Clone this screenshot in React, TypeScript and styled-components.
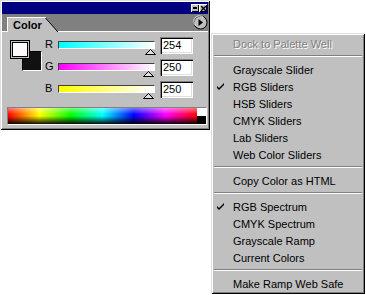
import React from "react"
import styled, { createGlobalStyle } from "styled-components"

const GlobalStyle = createGlobalStyle`
    html, body {
        margin: 0;
        padding: 0;
        background: #fff;
    }
    body {
        font-family: "Liberation Sans", Arial, sans-serif;
        font-size: 11px;
        color: #000;
    }
`

const raised = `
    inset 1px 1px 0 #dfdfdf,
    inset -1px -1px 0 #000,
    inset 2px 2px 0 #fff,
    inset -2px -2px 0 #808080
`

const sunken = `
    inset 1px 1px 0 #808080,
    inset 2px 2px 0 #000,
    inset -1px -1px 0 #fff,
    inset -2px -2px 0 #dfdfdf
`

const Screen = styled.div`
    display: flex;
    align-items: flex-start;
    width: 366px;
    height: 295px;
    overflow: hidden;
`

const Panel = styled.div`
    width: 210px;
    height: 130px;
    box-sizing: border-box;
    padding: 2px;
    background: #c0c0c0;
    box-shadow: ${raised};
    display: flex;
    flex-direction: column;
`

const TitleBar = styled.div`
    height: 12px;
    background: #000080;
    display: flex;
    justify-content: flex-end;
    align-items: center;
    padding-right: 1px;
`

const TitleButton = styled.div`
    width: 8px;
    height: 8px;
    box-sizing: border-box;
    background: #c0c0c0;
    box-shadow: inset 1px 1px 0 #fff, inset -1px -1px 0 #000;
    display: flex;
    align-items: center;
    justify-content: center;
`

const TabRow = styled.div`
    height: 18px;
    background: #808080;
    display: flex;
    align-items: flex-end;
`

const TabGap = styled.div`
    width: 5px;
    align-self: stretch;
    box-sizing: border-box;
    border-bottom: 1px solid #fff;
`

const Tab = styled.div`
    width: 38px;
    height: 15px;
    box-sizing: border-box;
    background: #c0c0c0;
    border-top: 1px solid #fff;
    border-left: 1px solid #fff;
    padding-left: 5px;
    font-weight: bold;
    font-size: 11px;
    line-height: 14px;
`

const TabFill = styled.div`
    flex: 1;
    align-self: stretch;
    box-sizing: border-box;
    border-bottom: 1px solid #fff;
    display: flex;
    justify-content: flex-end;
    align-items: center;
    padding-right: 0;
`

const Body = styled.div`
    flex: 1;
    padding: 5px 0 0 5px;
    display: flex;
    flex-direction: column;
`

const TopSection = styled.div`
    display: flex;
    align-items: flex-start;
`

const Swatches = styled.div`
    position: relative;
    width: 38px;
    height: 34px;
    margin-top: 3px;
`

const Foreground = styled.div`
    position: absolute;
    z-index: 1;
    left: 3px;
    top: 0;
    width: 20px;
    height: 19px;
    box-sizing: border-box;
    border: 1px solid #000;
    box-shadow: inset 0 0 0 1px #c0c0c0, inset 0 0 0 2px #000;
    background: #fef9f9;
`

const Background = styled.div`
    position: absolute;
    left: 15px;
    top: 11px;
    width: 20px;
    height: 20px;
    box-sizing: border-box;
    border: 1px solid #000;
    border-right-color: #fff;
    border-bottom-color: #fff;
    background: #111;
`

const SliderGrid = styled.div`
    display: grid;
    grid-template-columns: 13px 97px 38px;
    grid-auto-rows: 22px;
`

const Label = styled.div`
    font-size: 11px;
    line-height: 11px;
    padding-top: 2px;
`

const Track = styled.div`
    position: relative;
    padding-top: 4px;
`

const Bar = styled.div<{ $color: string }>`
    height: 8px;
    box-sizing: border-box;
    border: 1px solid;
    border-color: #404040 #fff #fff #404040;
    background: linear-gradient(to right, ${p => p.$color}, #fff);
`

const Knob = styled.svg`
    position: absolute;
    top: 12px;
    display: block;
`

const ValueBox = styled.div`
    margin-left: 5px;
    width: 33px;
    height: 17px;
    box-sizing: border-box;
    background: #fff;
    box-shadow: ${sunken};
    padding: 2px 0 0 3px;
    font-size: 11px;
    line-height: 13px;
`

const Spectrum = styled.div`
    margin-top: 4px;
    width: 200px;
    height: 18px;
    box-sizing: border-box;
    border: 1px solid;
    border-color: #808080 #fff #fff #808080;
    display: flex;
`

const SpectrumRamp = styled.div`
    flex: 1;
    background:
        linear-gradient(
            to bottom,
            rgba(255, 255, 255, 0.45) 0%,
            rgba(255, 255, 255, 0) 40%,
            rgba(0, 0, 0, 0) 50%,
            rgba(0, 0, 0, 0.95) 100%
        ),
        linear-gradient(
            to right,
            #f00 0%,
            #ff0 16.6%,
            #0f0 33.3%,
            #0ff 50%,
            #00f 66.6%,
            #f0f 83.3%,
            #f00 100%
        );
`

const EndSwatches = styled.div`
    width: 9px;
    display: flex;
    flex-direction: column;
`

const EndSwatch = styled.div<{ $color: string }>`
    flex: 1;
    background: ${p => p.$color};
`

const Menu = styled.div`
    margin-left: 1px;
    margin-top: 33px;
    width: 154px;
    height: 261px;
    box-sizing: border-box;
    padding: 2px;
    background: #c0c0c0;
    box-shadow: ${raised};
`

const MenuItem = styled.div<{ $disabled?: boolean }>`
    height: 17px;
    display: flex;
    align-items: center;
    padding-left: 4px;
    font-size: 11px;
    color: ${p => (p.$disabled ? "#808080" : "#000")};
    text-shadow: ${p => (p.$disabled ? "1px 1px 0 #fff" : "none")};
`

const CheckCol = styled.div`
    width: 16px;
    display: flex;
    align-items: center;
`

const Separator = styled.div`
    height: 0;
    margin: 3px 1px 4px;
    border-top: 1px solid #808080;
    border-bottom: 1px solid #fff;
`

const MenuButton = () => (
    <svg width={15} height={15} viewBox="0 0 15 15">
        <circle cx={7.5} cy={7.5} r={6.5} fill="#c0c0c0" stroke="#000" strokeWidth={1} />
        <path d="M2.5 10.5 A5 5 0 0 1 10.5 2.5" fill="none" stroke="#fff" strokeWidth={1} />
        <path d="M5.5 4 L10 7.5 L5.5 11 Z" fill="#000" />
    </svg>
)

const Check = () => (
    <svg width={8} height={7} viewBox="0 0 8 7">
        <path d="M0 3 L2 5 L7 0 L7 2 L2 7 L0 5 Z" fill="#000" />
    </svg>
)

const channels = [
    { name: "R", color: "#0ff", value: 254 },
    { name: "G", color: "#f0f", value: 250 },
    { name: "B", color: "#ff0", value: 250 }
]

type Entry = { label: string; checked?: boolean; disabled?: boolean } | "sep"

const menuEntries: Entry[] = [
    { label: "Dock to Palette Well", disabled: true },
    "sep",
    { label: "Grayscale Slider" },
    { label: "RGB Sliders", checked: true },
    { label: "HSB Sliders" },
    { label: "CMYK Sliders" },
    { label: "Lab Sliders" },
    { label: "Web Color Sliders" },
    "sep",
    { label: "Copy Color as HTML" },
    "sep",
    { label: "RGB Spectrum", checked: true },
    { label: "CMYK Spectrum" },
    { label: "Grayscale Ramp" },
    { label: "Current Colors" },
    "sep",
    { label: "Make Ramp Web Safe" }
]

export default function App() {
    return (
        <>
            <GlobalStyle />
            <Screen>
                <Panel>
                    <TitleBar>
                        <TitleButton>
                            <svg width={4} height={3}>
                                <rect x={0} y={0} width={4} height={2} fill="#000" />
                            </svg>
                        </TitleButton>
                        <TitleButton>
                            <svg width={5} height={5} viewBox="0 0 5 5">
                                <path d="M0 0 L5 5 M5 0 L0 5" stroke="#000" strokeWidth={1.4} />
                            </svg>
                        </TitleButton>
                    </TitleBar>
                    <TabRow>
                        <TabGap />
                        <Tab>Color</Tab>
                        <svg width={13} height={15} viewBox="0 0 13 15" style={{ display: "block" }}>
                            <polygon points="0,0 13,15 0,15" fill="#c0c0c0" />
                            <line x1={0} y1={0.5} x2={13} y2={15} stroke="#000" strokeWidth={1} />
                            <line x1={0} y1={0.5} x2={1} y2={0.5} stroke="#fff" strokeWidth={1} />
                        </svg>
                        <TabFill>
                            <MenuButton />
                        </TabFill>
                    </TabRow>
                    <Body>
                        <TopSection>
                            <Swatches>
                                <Foreground />
                                <Background />
                            </Swatches>
                            <SliderGrid>
                                {channels.map(c => (
                                    <React.Fragment key={c.name}>
                                        <Label>{c.name}</Label>
                                        <Track>
                                            <Bar $color={c.color} />
                                            <Knob
                                                width={11}
                                                height={6}
                                                viewBox="0 0 11 6"
                                                style={{ left: `${Math.round((c.value / 255) * 92) - 5}px` }}>
                                                <polygon
                                                    points="5.5,0.5 10.5,5.5 0.5,5.5"
                                                    fill="#dfdfdf"
                                                    stroke="#000"
                                                    strokeWidth={1}
                                                />
                                            </Knob>
                                        </Track>
                                        <ValueBox>{c.value}</ValueBox>
                                    </React.Fragment>
                                ))}
                            </SliderGrid>
                        </TopSection>
                        <Spectrum>
                            <SpectrumRamp />
                            <EndSwatches>
                                <EndSwatch $color="#fff" />
                                <EndSwatch $color="#000" />
                            </EndSwatches>
                        </Spectrum>
                    </Body>
                </Panel>
                <Menu>
                    {menuEntries.map((e, i) =>
                        e === "sep" ? (
                            <Separator key={i} />
                        ) : (
                            <MenuItem key={i} $disabled={e.disabled}>
                                <CheckCol>{e.checked && <Check />}</CheckCol>
                                {e.label}
                            </MenuItem>
                        )
                    )}
                </Menu>
            </Screen>
        </>
    )
}
